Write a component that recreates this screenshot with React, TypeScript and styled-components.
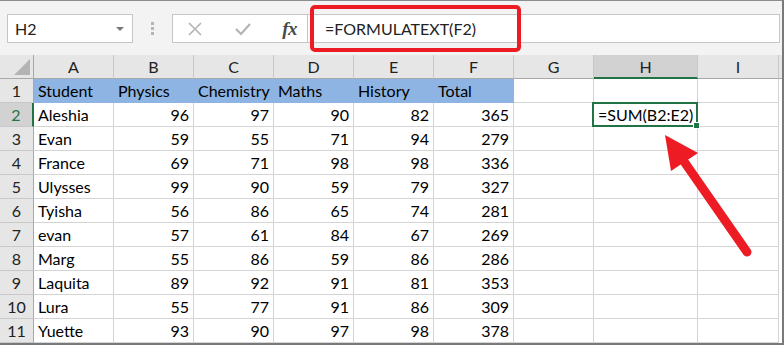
import { Fragment } from "react";
import styled, { createGlobalStyle } from "styled-components";

const GlobalStyle = createGlobalStyle`
  html, body {
    margin: 0;
    padding: 0;
    background: #ffffff;
    overflow: hidden;
  }
`;

const Frame = styled.div`
  position: relative;
  width: 784px;
  height: 345px;
  box-sizing: border-box;
  border-top: 1px solid #8c8c8c;
  border-right: 2px solid #7a7a7a;
  border-bottom: 2px solid #7a7a7a;
  background: #f3f3f3;
  font-family: Lato, "Liberation Sans", sans-serif;
  color: #000;
  overflow: hidden;
`;

const Toolbar = styled.div`
  height: 54px;
  box-sizing: border-box;
  display: flex;
  align-items: flex-start;
  padding: 13px 2px 0 7px;
  background: #f3f3f3;
`;

const NameBox = styled.div`
  width: 126px;
  height: 29px;
  box-sizing: border-box;
  background: #fff;
  border: 1px solid #c6c6c6;
  display: flex;
  align-items: center;
  justify-content: space-between;
  padding: 0 8px 0 7px;
  font-size: 16px;
  color: #222;
`;

const Caret = styled.span`
  width: 0;
  height: 0;
  border-left: 4px solid transparent;
  border-right: 4px solid transparent;
  border-top: 4px solid #777;
`;

const Grip = styled.div`
  width: 39px;
  height: 29px;
  display: flex;
  flex-direction: column;
  align-items: center;
  justify-content: center;
  gap: 2px;
  span {
    width: 3px;
    height: 3px;
    background: #b5b5b5;
  }
`;

const FxGroup = styled.div`
  width: 136px;
  height: 29px;
  box-sizing: border-box;
  background: #fff;
  border: 1px solid #c6c6c6;
  display: flex;
  align-items: center;
  padding: 0 10px 0 14px;
  justify-content: space-between;
`;

const FxLabel = styled.span`
  font-family: "Liberation Serif", serif;
  font-style: italic;
  font-weight: bold;
  font-size: 19px;
  color: #4a4a4a;
  letter-spacing: -0.5px;
`;

const FormulaInput = styled.div`
  flex: 1;
  height: 29px;
  box-sizing: border-box;
  background: #fff;
  border: 1px solid #c6c6c6;
  border-left: none;
  display: flex;
  align-items: center;
  padding-left: 17px;
  font-size: 16px;
  color: #222;
`;

const Sheet = styled.div`
  display: grid;
  grid-template-columns: 34px repeat(7, 80px) 104px 81px 1fr;
  grid-auto-rows: 24px;
  background: #fff;
`;

const Cell = styled.div<{ $align?: "left" | "right"; $fill?: boolean; $active?: boolean }>`
  position: relative;
  box-sizing: border-box;
  border-right: 1px solid ${(p) => (p.$fill ? "#8db4e2" : "#d4d4d4")};
  border-bottom: 1px solid ${(p) => (p.$fill ? "#8db4e2" : "#d4d4d4")};
  background: ${(p) => (p.$fill ? "#8db4e2" : "#fff")};
  display: flex;
  align-items: center;
  justify-content: ${(p) => (p.$align === "right" ? "flex-end" : "flex-start")};
  padding: 0 4px;
  font-size: 16px;
  white-space: nowrap;
  ${(p) =>
    p.$active &&
    `
    overflow: visible;
    z-index: 2;
    &::after {
      content: "";
      position: absolute;
      left: -2px;
      top: -1px;
      right: -1px;
      bottom: -1px;
      border: 2px solid #217346;
    }
    &::before {
      content: "";
      position: absolute;
      right: -3px;
      bottom: -3px;
      width: 5px;
      height: 5px;
      background: #217346;
      border: 1px solid #fff;
      z-index: 3;
    }
  `}
`;

const ColHead = styled.div<{ $sel?: boolean }>`
  box-sizing: border-box;
  background: ${(p) => (p.$sel ? "#d2d2d2" : "#e6e6e6")};
  border-right: 1px solid #c8c8c8;
  border-bottom: ${(p) => (p.$sel ? "2px solid #217346" : "1px solid #a8a8a8")};
  display: flex;
  align-items: center;
  justify-content: center;
  padding-top: ${(p) => (p.$sel ? "1px" : "0")};
  font-size: 16px;
  color: #222;
`;

const RowHead = styled.div<{ $sel?: boolean }>`
  box-sizing: border-box;
  background: ${(p) => (p.$sel ? "#d2d2d2" : "#e6e6e6")};
  border-right: ${(p) => (p.$sel ? "2px solid #217346" : "1px solid #a8a8a8")};
  border-bottom: 1px solid #c8c8c8;
  display: flex;
  align-items: center;
  justify-content: center;
  font-size: 16px;
  color: ${(p) => (p.$sel ? "#217346" : "#222")};
`;

const Corner = styled.div`
  box-sizing: border-box;
  background: #e6e6e6;
  border-right: 1px solid #a8a8a8;
  border-bottom: 1px solid #a8a8a8;
  display: flex;
  align-items: flex-end;
  justify-content: flex-end;
  padding: 0 3px 3px 0;
`;

const Filler = styled.div<{ $head?: boolean }>`
  background: ${(p) => (p.$head ? "#e6e6e6" : "#fff")};
  box-sizing: border-box;
  border-bottom: ${(p) => (p.$head ? "1px solid #a8a8a8" : "none")};
`;

const Overlay = styled.svg`
  position: absolute;
  left: 0;
  top: -1px;
  pointer-events: none;
`;

const cols = ["A", "B", "C", "D", "E", "F", "G", "H", "I"];
const head = ["Student", "Physics", "Chemistry", "Maths", "History", "Total"];
const rows: [string, number, number, number, number, number][] = [
  ["Aleshia", 96, 97, 90, 82, 365],
  ["Evan", 59, 55, 71, 94, 279],
  ["France", 69, 71, 98, 98, 336],
  ["Ulysses", 99, 90, 59, 79, 327],
  ["Tyisha", 56, 86, 65, 74, 281],
  ["evan", 57, 61, 84, 67, 269],
  ["Marg", 55, 86, 59, 86, 286],
  ["Laquita", 89, 92, 91, 81, 353],
  ["Lura", 55, 77, 91, 86, 309],
  ["Yuette", 93, 90, 97, 98, 378],
];

export default function App() {
  return (
    <Frame>
      <GlobalStyle />
      <Toolbar>
        <NameBox>
          H2
          <Caret />
        </NameBox>
        <Grip>
          <span />
          <span />
          <span />
        </Grip>
        <FxGroup>
          <svg width="16" height="16" viewBox="0 0 16 16">
            <path d="M2 2 L14 14 M14 2 L2 14" stroke="#b3b3b3" strokeWidth="1.6" fill="none" />
          </svg>
          <svg width="18" height="16" viewBox="0 0 18 16">
            <path d="M2 8 L7 13 L16 3" stroke="#b3b3b3" strokeWidth="2.2" fill="none" />
          </svg>
          <FxLabel>fx</FxLabel>
        </FxGroup>
        <FormulaInput>=FORMULATEXT(F2)</FormulaInput>
      </Toolbar>

      <Sheet>
        <Corner>
          <svg width="16" height="16" viewBox="0 0 16 16">
            <polygon points="16,0 16,16 0,16" fill="#b4b4b4" />
          </svg>
        </Corner>
        {cols.map((c) => (
          <ColHead key={c} $sel={c === "H"}>
            {c}
          </ColHead>
        ))}
        <Filler $head />

        <RowHead>1</RowHead>
        {head.map((h) => (
          <Cell key={h} $fill>
            {h}
          </Cell>
        ))}
        <Cell />
        <Cell />
        <Cell />
        <Filler />

        {rows.map((r, i) => (
          <Fragment key={r[0] + i}>
            <RowHead $sel={i === 0}>{i + 2}</RowHead>
            {r.map((v, j) => (
              <Cell key={j} $align={j === 0 ? "left" : "right"}>
                {v}
              </Cell>
            ))}
            <Cell />
            <Cell $active={i === 0}>{i === 0 ? "=SUM(B2:E2)" : ""}</Cell>
            <Cell />
            <Filler />
          </Fragment>
        ))}
      </Sheet>

      <Overlay width="784" height="345" viewBox="0 0 784 345">
        <rect x="312" y="7" width="207" height="43" rx="3" fill="none" stroke="#ed1c24" strokeWidth="4" />
        <line x1="683" y1="160" x2="747" y2="252" stroke="#ed1c24" strokeWidth="9" strokeLinecap="round" />
        <polygon points="665,135 698,153 671,171" fill="#ed1c24" />
      </Overlay>
    </Frame>
  );
}
